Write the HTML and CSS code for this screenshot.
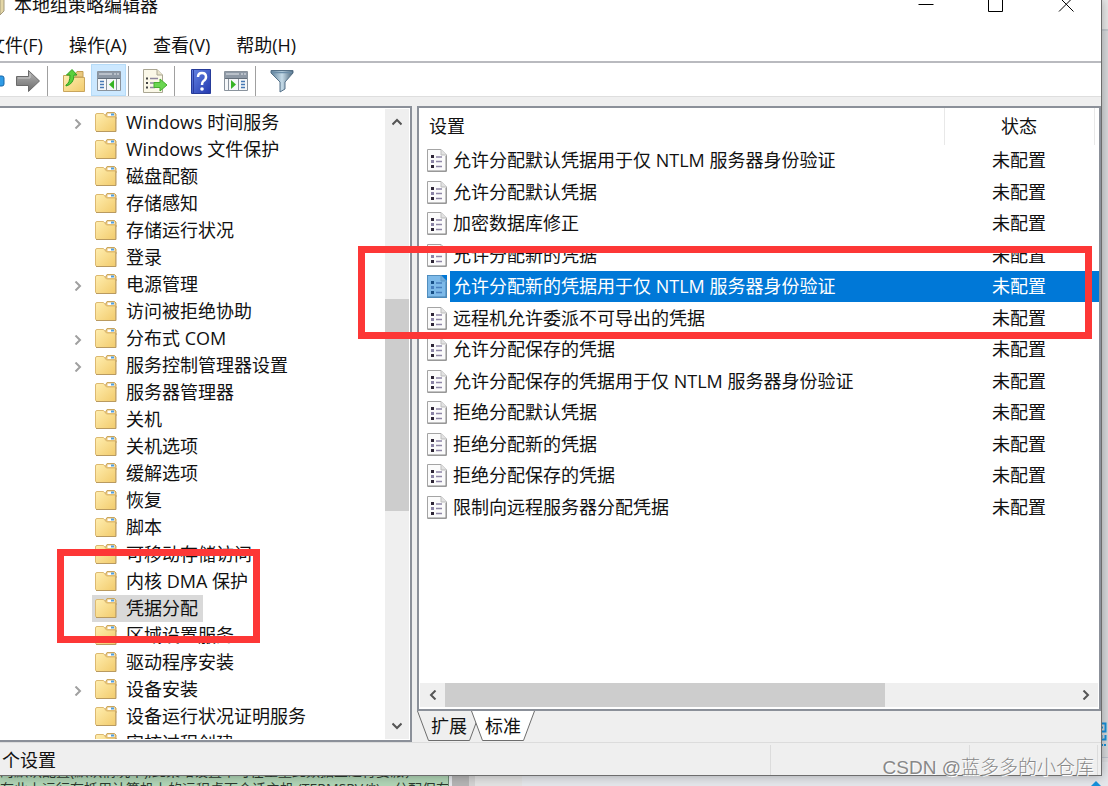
FILE: index.html
```html
<!DOCTYPE html>
<html lang="zh-CN">
<head>
  <meta charset="UTF-8" />
  <meta name="viewport" content="width=device-width, initial-scale=1.0" />
  <title>本地组策略编辑器</title>
  <link rel="stylesheet" href="styles.css">
</head>
<body>

<!-- Shared icons -->
<svg class="icon-defs" width="0" height="0">
  <defs>
    <linearGradient id="folderFill" x1="0" y1="0" x2="1" y2="1">
      <stop offset="0" stop-color="#ffeeb0" />
      <stop offset="1" stop-color="#f2cb6c" />
    </linearGradient>
    <linearGradient id="greyFill" x1="0" y1="0" x2="0" y2="1">
      <stop offset="0" stop-color="#b5b5b5" />
      <stop offset="1" stop-color="#6c6c6c" />
    </linearGradient>
    <linearGradient id="helpFill" x1="0" y1="0" x2="1" y2="1">
      <stop offset="0" stop-color="#6585e4" />
      <stop offset="1" stop-color="#2338ae" />
    </linearGradient>
    <linearGradient id="funnelFill" x1="0" y1="0" x2="1" y2="0">
      <stop offset="0" stop-color="#5e7f98" />
      <stop offset="0.5" stop-color="#c5dbe8" />
      <stop offset="1" stop-color="#4a6478" />
    </linearGradient>
    <symbol id="folder" viewBox="0 0 22 22">
      <path d="M10 5 L12 1.500 H19.500 L21 3 V8 H10 Z" fill="#e7c274" stroke="#c9a55d" />
      <path d="M12.500 2.500 H19.500 V5 H12.500 Z" fill="#fff" />
      <path d="M16 2.500 H19 V4.500 H16 Z" fill="#4e9fe0" />
      <path d="M0.500 4 Q0.500 2.500 2 2.500 H8.500 L11.500 6 H20.500 V20.500 H1.500 L0.500 19 Z" fill="url(#folderFill)" stroke="#dcb971" />
      <path d="M1 20.500 H21 V6" fill="none" stroke="#b99a60" />
    </symbol>
    <symbol id="policy" viewBox="0 0 20 23">
      <path d="M0.500 0.500 H14 L19.500 6 V22.500 H0.500 Z" fill="#fbfbfb" stroke="#a4a4a4" />
      <path d="M14 0.500 V6 H19.500" fill="#e2e2e2" stroke="#bdbdbd" />
      <path d="M1 22 H19 V7" fill="none" stroke="#8b8b8b" />
      <path d="M4 6 H7 V9 H4 Z M4 16 H7 V19 H4 Z" fill="#2f2738" />
      <path d="M4 11 H7 V14 H4 Z" fill="#8b84a5" />
      <path d="M9 8 H15 M9 12.500 H15 M9 17.500 H15" stroke="#8f87a6" stroke-width="1.500" />
    </symbol>
    <symbol id="chevron" viewBox="0 0 10 10">
      <path d="M2.500 0.500 L7 5 L2.500 9.500" fill="none" stroke="currentColor" stroke-width="2" />
    </symbol>
    <symbol id="pane" viewBox="0 0 24 20">
      <path d="M0.500 0.500 H23.500 V19.500 H0.500 Z" fill="#f5f7f9" stroke="#8a939d" />
      <path d="M1 1 H23 V7 H1 Z" fill="#8e99a6" />
      <path d="M2 3 H15 M17 3 H19 M20 3 H22" stroke="#e5e9ee" />
      <path d="M1 7.500 H23" stroke="#646f7b" />
    </symbol>
  </defs>
</svg>

<!-- Page behind the window -->
<div class="backdrop">
  <div class="notes">的默认配置(默认情况下),此策略设置不可在重量此数据上进行委派，<br>在此上运行在抵用计算机上的远程桌面会话主机 (TERMSRV/*)。分配保存</div>
  <div class="back-scroll"></div>
  <div class="back-gutter"></div>
</div>
<div class="side-strip">
  <svg class="side-qr" width="8" height="25" viewBox="0 0 8 25">
    <path d="M0 1.500 H5.500 V9.500 H0 M1 5.500 H3 M0 17.500 H5.500 V13 M1.500 13 V16 M1 23 H3 M4 23 H6" fill="none" stroke="#1691dc" stroke-width="2" />
  </svg>
</div>
<svg class="side-dot" width="10" height="5" viewBox="0 0 10 5">
  <path d="M0 5 L5 0 L10 5 Z" fill="#1691dc" />
</svg>

<div class="window">
  <header class="title-bar">
    <svg class="title-icon" width="5" height="20" viewBox="0 0 5 20">
      <path d="M0 0 H4 V15 L0 19 Z" fill="#e3d6a6" stroke="#a49a7c" />
    </svg>
    <h1>本地组策略编辑器</h1>
    <div class="window-buttons">
      <button type="button" aria-label="最小化"><svg width="16" height="16" viewBox="0 0 16 16"><path d="M0.500 8.500 H15.500" /></svg></button>
      <button type="button" aria-label="最大化"><svg width="16" height="16" viewBox="0 0 16 16"><path d="M0.500 0.500 H14.500 V15.500 H0.500 Z" /></svg></button>
      <button type="button" aria-label="关闭"><svg width="16" height="16" viewBox="0 0 16 16"><path d="M1 1 L15.500 15.500 M15.500 1 L1 15.500" /></svg></button>
    </div>
  </header>

  <nav class="menu">
    <button type="button">文件(F)</button>
    <button type="button">操作(A)</button>
    <button type="button">查看(V)</button>
    <button type="button">帮助(H)</button>
  </nav>

  <div class="toolbar">
    <button type="button" aria-label="后退">
      <svg width="24" height="24" viewBox="0 0 24 24"><path d="M1 12 L11 2 V7 H21 Q23 7 23 9 V15 Q23 17 21 17 H11 V22 Z" fill="#2f9be6" stroke="#1766a8" /></svg>
    </button>
    <button type="button" aria-label="前进">
      <svg width="24" height="24" viewBox="0 0 24 24"><path d="M0.500 7.500 H12.500 V1.500 L23.500 12 L12.500 22.500 V16.500 H0.500 Z" fill="url(#greyFill)" stroke="#6a6a6a" /><path d="M2 9 H14 V5" fill="none" stroke="#c9c9c9" /></svg>
    </button>
    <span class="separator"></span>
    <button type="button" aria-label="向上">
      <svg width="24" height="24" viewBox="0 0 24 24"><path d="M13 5 L15 2.500 H21 V8 H13 Z" fill="#e9c87e" stroke="#c5a052" /><path d="M1.500 6.500 H9 L11 8.500 H22.500 V22.500 H1.500 Z" fill="url(#folderFill)" stroke="#c9a55d" /><path d="M4 16 Q8 14 8 6 H4.500 L10 0.500 L15 6 H12 Q12 15 4 17 Z" fill="#59d03c" stroke="#33a01f" /></svg>
    </button>
    <button type="button" class="active" aria-label="显示/隐藏控制台树">
      <svg width="24" height="20" viewBox="0 0 24 20"><use href="#pane" /><path d="M3 10.500 H7 M3 13.500 H7 M3 16.500 H7" stroke="#4678b5" stroke-width="1.500" /><path d="M9.500 8 V19 M19.500 8 V19" stroke="#8a939d" /><path d="M17 9 V18 L12 13.500 Z" fill="#36b423" /></svg>
    </button>
    <span class="separator"></span>
    <button type="button" aria-label="导出列表">
      <svg width="26" height="24" viewBox="0 0 26 24"><path d="M1.500 0.500 H15 L20.500 6 V23.500 H1.500 Z" fill="#fbf8e8" stroke="#aaa693" /><path d="M15 0.500 V6 H20.500" fill="#eae5cc" stroke="#aaa693" /><path d="M4 9.500 H6 M4 14 H6 M4 18.500 H6" stroke="#444" stroke-width="2" /><path d="M8 9.500 H16 M8 14 H13 M8 18.500 H13" stroke="#8f879e" stroke-width="1.500" /><path d="M12 13.500 H18 V10 L25 16 L18 22 V18.500 H12 Z" fill="#69d650" stroke="#47ad31" /></svg>
    </button>
    <span class="separator"></span>
    <button type="button" aria-label="帮助">
      <svg width="20" height="25" viewBox="0 0 20 25"><path d="M0.500 0.500 H19.500 V24.500 H0.500 Z" fill="url(#helpFill)" stroke="#263b9a" /><path d="M2.500 1 V24" stroke="#2a3c9f" /><path d="M7 8 Q7 4 11 4 Q15 4 15 8 Q15 10.500 12.500 12 Q11 13 11 16" fill="none" stroke="#fff" stroke-width="2.500" /><circle cx="11" cy="20" r="1.800" fill="#fff" /></svg>
    </button>
    <button type="button" aria-label="显示/隐藏操作窗格">
      <svg width="24" height="20" viewBox="0 0 24 20"><use href="#pane" /><path d="M17 10.500 H21 M17 13.500 H21 M17 16.500 H21" stroke="#4678b5" stroke-width="1.500" /><path d="M4.500 8 V19 M14.500 8 V19" stroke="#8a939d" /><path d="M7 9 V18 L12 13.500 Z" fill="#36b423" /></svg>
    </button>
    <span class="separator"></span>
    <button type="button" aria-label="筛选器">
      <svg width="24" height="24" viewBox="0 0 24 24"><path d="M1 1.500 H23 V4 L15 13 V20 L10 23 V13 L1 4 Z" fill="url(#funnelFill)" stroke="#557188" /><path d="M2 3.500 H22" stroke="#6b8da8" stroke-width="1.500" /></svg>
    </button>
  </div>

  <main class="panes">
    <section class="tree-pane">
      <ul class="tree">
        <li><svg class="expander"><use href="#chevron" /></svg><svg class="folder"><use href="#folder" /></svg>Windows 时间服务</li>
        <li><svg class="folder"><use href="#folder" /></svg>Windows 文件保护</li>
        <li><svg class="folder"><use href="#folder" /></svg>磁盘配额</li>
        <li><svg class="folder"><use href="#folder" /></svg>存储感知</li>
        <li><svg class="folder"><use href="#folder" /></svg>存储运行状况</li>
        <li><svg class="folder"><use href="#folder" /></svg>登录</li>
        <li><svg class="expander"><use href="#chevron" /></svg><svg class="folder"><use href="#folder" /></svg>电源管理</li>
        <li><svg class="folder"><use href="#folder" /></svg>访问被拒绝协助</li>
        <li><svg class="expander"><use href="#chevron" /></svg><svg class="folder"><use href="#folder" /></svg>分布式 COM</li>
        <li><svg class="expander"><use href="#chevron" /></svg><svg class="folder"><use href="#folder" /></svg>服务控制管理器设置</li>
        <li><svg class="folder"><use href="#folder" /></svg>服务器管理器</li>
        <li><svg class="folder"><use href="#folder" /></svg>关机</li>
        <li><svg class="folder"><use href="#folder" /></svg>关机选项</li>
        <li><svg class="folder"><use href="#folder" /></svg>缓解选项</li>
        <li><svg class="folder"><use href="#folder" /></svg>恢复</li>
        <li><svg class="folder"><use href="#folder" /></svg>脚本</li>
        <li><svg class="folder"><use href="#folder" /></svg>可移动存储访问</li>
        <li><svg class="folder"><use href="#folder" /></svg>内核 DMA 保护</li>
        <li class="selected"><svg class="folder"><use href="#folder" /></svg>凭据分配</li>
        <li><svg class="folder"><use href="#folder" /></svg>区域设置服务</li>
        <li><svg class="folder"><use href="#folder" /></svg>驱动程序安装</li>
        <li><svg class="expander"><use href="#chevron" /></svg><svg class="folder"><use href="#folder" /></svg>设备安装</li>
        <li><svg class="folder"><use href="#folder" /></svg>设备运行状况证明服务</li>
        <li><svg class="folder"><use href="#folder" /></svg>审核过程创建</li>
      </ul>
      <div class="scroll-v">
        <button type="button" class="up" aria-label="向上滚动"><svg width="10" height="10"><use href="#chevron" /></svg></button>
        <div class="track"><div class="thumb"></div></div>
        <button type="button" class="down" aria-label="向下滚动"><svg width="10" height="10"><use href="#chevron" /></svg></button>
      </div>
    </section>

    <section class="detail-pane">
      <div class="list-box">
        <table class="settings">
          <colgroup>
            <col class="col-icon"><col><col class="col-state"><col class="col-end">
          </colgroup>
          <thead>
            <tr><th colspan="2">设置</th><th class="state">状态</th><th></th></tr>
          </thead>
          <tbody>
            <tr><td><svg class="policy"><use href="#policy" /></svg></td><td>允许分配默认凭据用于仅 NTLM 服务器身份验证</td><td class="state">未配置</td><td></td></tr>
            <tr><td><svg class="policy"><use href="#policy" /></svg></td><td>允许分配默认凭据</td><td class="state">未配置</td><td></td></tr>
            <tr><td><svg class="policy"><use href="#policy" /></svg></td><td>加密数据库修正</td><td class="state">未配置</td><td></td></tr>
            <tr><td><svg class="policy"><use href="#policy" /></svg></td><td>允许分配新的凭据</td><td class="state">未配置</td><td></td></tr>
            <tr class="selected"><td><svg class="policy"><use href="#policy" /></svg></td><td>允许分配新的凭据用于仅 NTLM 服务器身份验证</td><td class="state">未配置</td><td></td></tr>
            <tr><td><svg class="policy"><use href="#policy" /></svg></td><td>远程机允许委派不可导出的凭据</td><td class="state">未配置</td><td></td></tr>
            <tr><td><svg class="policy"><use href="#policy" /></svg></td><td>允许分配保存的凭据</td><td class="state">未配置</td><td></td></tr>
            <tr><td><svg class="policy"><use href="#policy" /></svg></td><td>允许分配保存的凭据用于仅 NTLM 服务器身份验证</td><td class="state">未配置</td><td></td></tr>
            <tr><td><svg class="policy"><use href="#policy" /></svg></td><td>拒绝分配默认凭据</td><td class="state">未配置</td><td></td></tr>
            <tr><td><svg class="policy"><use href="#policy" /></svg></td><td>拒绝分配新的凭据</td><td class="state">未配置</td><td></td></tr>
            <tr><td><svg class="policy"><use href="#policy" /></svg></td><td>拒绝分配保存的凭据</td><td class="state">未配置</td><td></td></tr>
            <tr><td><svg class="policy"><use href="#policy" /></svg></td><td>限制向远程服务器分配凭据</td><td class="state">未配置</td><td></td></tr>
          </tbody>
        </table>
        <div class="scroll-h">
          <button type="button" class="left" aria-label="向左滚动"><svg width="10" height="10"><use href="#chevron" /></svg></button>
          <div class="track"><div class="thumb"></div></div>
          <button type="button" class="right" aria-label="向右滚动"><svg width="10" height="10"><use href="#chevron" /></svg></button>
        </div>
      </div>
      <div class="tabs">
        <button type="button" class="tab"><svg viewBox="0 0 64 30"><path d="M0.500 0 L11.500 29.500 H52.500 L63.500 0" /></svg><span>扩展</span></button>
        <button type="button" class="tab current"><svg viewBox="0 0 64 30"><path d="M0.500 0 L11.500 29.500 H52.500 L63.500 0" /></svg><span>标准</span></button>
      </div>
    </section>
  </main>

  <footer class="status">
    <span class="status-text">个设置</span>
    <span class="status-cell"></span>
    <span class="status-cell wide"></span>
  </footer>
</div>

<!-- Highlight frames and watermark -->
<div class="mark mark-policy"></div>
<div class="mark mark-tree"></div>
<div class="watermark">CSDN @蓝多多的小仓库</div>

</body>
</html>
```
FILE: styles.css
```css
/* General Styling */
* {
  box-sizing: border-box;
}

body {
  margin: 0;
  height: 100vh;
  overflow: hidden;
  position: relative;
  background-color: #dddfe2;
  color: #111;
  font-family: "Open Sans", "Noto Sans CJK SC", sans-serif;
  font-size: 18px;
  line-height: 27px;
}

button {
  padding: 0;
  border: none;
  background: none;
  color: inherit;
  font: inherit;
}

svg {
  display: block;
}

.icon-defs {
  position: absolute;
}

/* Page behind the window */
.backdrop {
  position: absolute;
  left: 0;
  right: 0;
  bottom: 0;
  height: 24px;
  display: flex;
  background-color: #e4e6ea;
}

.notes {
  width: 449px;
  overflow: hidden;
  white-space: nowrap;
  background-color: #b0d4b5;
  border-right: 1px solid #6e8a73;
  color: #2c3a2e;
  font-size: 14px;
  line-height: 18px;
}

.back-scroll {
  width: 17px;
  margin-left: 3px;
  background-color: #b4b4b4;
}

.back-gutter {
  width: 53px;
  background-color: #e2e2e2;
  border-left: 6px solid #d2d2d2;
}

.side-strip {
  position: absolute;
  top: 0;
  right: 0;
  bottom: 28px;
  width: 7px;
  background: linear-gradient(#e9e9e9 29px, #c5cbd0 29px, #c5cbd0 31px, #d8dadc 31px);
  border-bottom: 1px solid #bfc5cf;
}

.side-qr {
  position: absolute;
  right: 0;
  bottom: 10px;
}

.side-dot {
  position: absolute;
  right: 7px;
  bottom: 0;
}

/* Window */
.window {
  position: relative;
  display: flex;
  flex-direction: column;
  height: calc(100vh - 10px);
  margin-right: 6px;
  background-color: #efefef;
  border-right: 1px solid #6d6d6d;
  border-bottom: 1px solid #6d6d6d;
  box-shadow: 0 0 10px rgba(0, 0, 0, 0.3);
}

.title-bar {
  display: flex;
  height: 25px;
  background-color: #fff;
  line-height: 10px;
}

.title-icon {
  margin-top: -4px;
}

.title-bar h1 {
  margin: 0 0 0 9px;
  font-size: 18px;
  font-weight: normal;
}

.window-buttons {
  display: flex;
  margin-left: auto;
}

.window-buttons button {
  display: flex;
  align-items: center;
  justify-content: center;
  width: 70px;
  height: 8px;
}

.window-buttons svg {
  flex: none;
  fill: none;
  stroke: #000;
}

/* Menu */
.menu {
  display: flex;
  gap: 26px;
  height: 38px;
  padding-top: 4px;
  background-color: #fff;
  border-bottom: 2px solid #b9babf;
}

.menu button:first-child {
  margin-left: -13px;
}

/* Toolbar */
.toolbar {
  display: flex;
  height: 33px;
  padding-top: 1px;
  background-color: #fff;
}

.toolbar button {
  display: flex;
  align-items: center;
  justify-content: center;
  width: 35px;
  padding-top: 2px;
}

.toolbar button:first-child {
  margin-left: -25px;
}

.toolbar .active {
  background-color: #cce8ff;
  border: 1px solid #b5dbf8;
}

.separator {
  width: 1px;
  margin: 2px 8px 0 2px;
  background-color: #a0a0a0;
}

/* Panes */
.panes {
  display: flex;
  flex: 1;
  gap: 5px;
  min-height: 0;
  padding-top: 9px;
  border-top: 1px solid #dedede;
}

.tree-pane {
  display: flex;
  width: 412px;
  padding: 1px 1px 1px 0;
  background-color: #fff;
  border: 2px solid #8b9099;
  border-left: none;
}

.tree {
  flex: 1;
  margin: 0;
  padding: 0;
  overflow: hidden;
  list-style: none;
}

.tree li {
  display: flex;
  align-items: center;
  width: max-content;
  height: 27px;
  margin-left: 92px;
  padding: 0 5px 0 3px;
}

.tree .selected {
  background-color: #d9d9d9;
}

.expander {
  width: 10px;
  height: 10px;
  margin: 3px 12px 0 -22px;
  color: #a0a0a0;
}

.folder {
  width: 22px;
  height: 22px;
  margin: 0 9px 2px 0;
}

/* Scroll bars */
.scroll-v,
.scroll-h {
  display: flex;
  background-color: #efefef;
  color: #555;
}

.scroll-v {
  flex-direction: column;
  width: 24px;
}

.scroll-h {
  height: 24px;
  margin: auto 1px 2px;
}

.scroll-v button,
.scroll-h button {
  display: flex;
  flex: none;
  align-items: center;
  justify-content: center;
  width: 24px;
  height: 26px;
}

.scroll-h button {
  width: 25px;
  height: 24px;
}

.track {
  flex: 1;
}

.thumb {
  background-color: #cdcdcd;
}

.scroll-v .track {
  padding-top: 164px;
}

.scroll-v .thumb {
  height: 212px;
}

.scroll-h .thumb {
  width: 70%;
  height: 100%;
}

.up svg {
  transform: rotate(-90deg);
}

.down svg {
  transform: rotate(90deg);
}

.left svg {
  transform: rotate(180deg);
}

/* Settings list */
.detail-pane {
  display: flex;
  flex: 1;
  flex-direction: column;
  min-width: 0;
}

.list-box {
  display: flex;
  flex: 1;
  flex-direction: column;
  background-color: #fff;
  border: 2px solid #8b9099;
}

.settings {
  width: 100%;
  border-collapse: collapse;
  table-layout: fixed;
}

.col-icon {
  width: 31px;
}

.col-state {
  width: 150px;
}

.col-end {
  width: 5px;
}

.settings th {
  height: 37px;
  padding: 0 0 0 10px;
  border-right: 1px solid #e8e8e8;
  font-weight: normal;
  text-align: left;
}

.settings th:last-child {
  padding: 0;
  border: none;
}

.settings td {
  height: 31px;
  padding: 0 0 0 3px;
  white-space: nowrap;
}

.settings tr:nth-child(even) td {
  height: 32px;
}

.settings td:first-child {
  padding-left: 8px;
}

.settings td:last-child {
  padding: 0;
}

.settings .state {
  padding: 0;
  text-align: center;
}

.settings .selected td {
  background-color: #0078d7;
  color: #fff;
}

.settings .selected td:first-child {
  background-color: #fff;
}

.policy {
  width: 20px;
  height: 23px;
}

.selected .policy {
  background-color: #0078d7;
}

.selected .policy use {
  opacity: 0.5;
}

/* Tabs */
.tabs {
  display: flex;
  height: 31px;
}

.tab {
  position: relative;
  width: 64px;
  height: 30px;
}

.tab + .tab {
  margin-left: -10px;
}

.tab svg {
  position: absolute;
  inset: 0;
  fill: #efefef;
  stroke: #6d6d6d;
}

.tab.current svg {
  fill: #fff;
}

.tab span {
  position: relative;
}

/* Status bar */
.status {
  display: flex;
  height: 33px;
  padding-right: 3px;
  border-top: 1px solid #dcdcdc;
}

.status-text {
  flex: 1;
  padding: 4px 0 0 2px;
}

.status-cell {
  width: 199px;
  margin-top: 2px;
  border-left: 1px solid #dcdcdc;
}

.status-cell.wide {
  width: 129px;
  border-right: 1px solid #dcdcdc;
}

/* Highlight frames */
.mark {
  position: absolute;
  border: 7px solid #fd3736;
}

.mark-policy {
  top: 246px;
  left: 358px;
  right: 16px;
  height: 93px;
}

.mark-tree {
  top: 549px;
  left: 57px;
  width: 203px;
  height: 94px;
}

.watermark {
  position: absolute;
  right: 14px;
  bottom: 5px;
  color: #888;
  font-family: "Liberation Sans", "Noto Sans CJK SC", sans-serif;
  font-size: 19px;
  font-weight: 300;
  text-shadow: 1px 1px 0 #fff;
}
```
